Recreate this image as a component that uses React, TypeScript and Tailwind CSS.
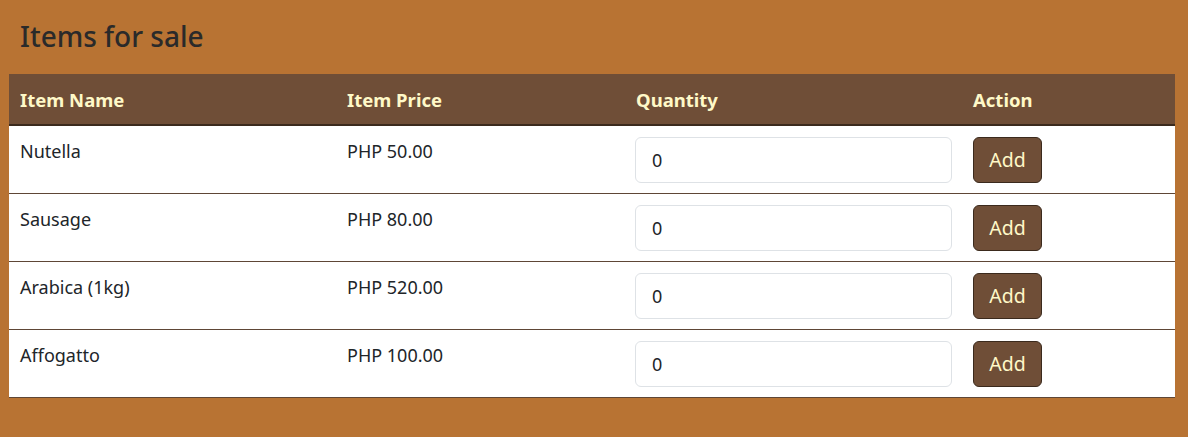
const items = [
  { name: 'Nutella', price: 'PHP 50.00' },
  { name: 'Sausage', price: 'PHP 80.00' },
  { name: 'Arabica (1kg)', price: 'PHP 520.00' },
  { name: 'Affogatto', price: 'PHP 100.00' },
];

export default function App() {
  return (
    <div className="min-h-[437px] bg-[#b87333] px-[9px] pt-[19px] pb-[40px] text-[#212529] [font-family:'Noto_Sans',sans-serif]">
      <h3 className="mb-[21px] pl-[11px] text-[28px] leading-[34px] font-medium text-[#2a2a2a]">Items for sale</h3>
      <table className="w-[1166px] table-fixed border-collapse bg-white text-[18px]">
        <colgroup>
          <col className="w-[327px]" />
          <col className="w-[289px]" />
          <col className="w-[337px]" />
          <col className="w-[213px]" />
        </colgroup>
        <thead>
          <tr className="border-b-2 border-[#3b2a1d] bg-[#6f4e37] text-left text-[#fff9c8]">
            <th className="px-[11px] pt-[12px] pb-[11px] text-[18.5px] leading-[27px] font-bold">Item Name</th>
            <th className="px-[11px] pt-[12px] pb-[11px] text-[18.5px] leading-[27px] font-bold">Item Price</th>
            <th className="px-[11px] pt-[12px] pb-[11px] text-[18.5px] leading-[27px] font-bold">Quantity</th>
            <th className="px-[11px] pt-[12px] pb-[11px] text-[18.5px] leading-[27px] font-bold">Action</th>
          </tr>
        </thead>
        <tbody>
          {items.map((item) => (
            <tr key={item.name} className="border-b border-[#5e4636]">
              <td className="px-[11px] py-[10.5px] align-top leading-[27px]">
                <div className="pt-[1px]">{item.name}</div>
              </td>
              <td className="px-[11px] py-[10.5px] align-top leading-[27px]">
                <div className="pt-[1px]">{item.price}</div>
              </td>
              <td className="px-[11px] py-[10.5px] align-top">
                <input
                  type="text"
                  defaultValue="0"
                  className="-ml-px block h-[46px] w-[317px] rounded-[6px] border border-[#dee2e6] px-4 text-[18px] outline-none"
                />
              </td>
              <td className="px-[11px] py-[10.5px] align-top">
                <button className="block h-[46px] w-[69px] rounded-[6px] border border-[#3b2a1d] bg-[#6f4e37] text-[19.5px] text-[#fff9c8]">
                  Add
                </button>
              </td>
            </tr>
          ))}
        </tbody>
      </table>
    </div>
  );
}
